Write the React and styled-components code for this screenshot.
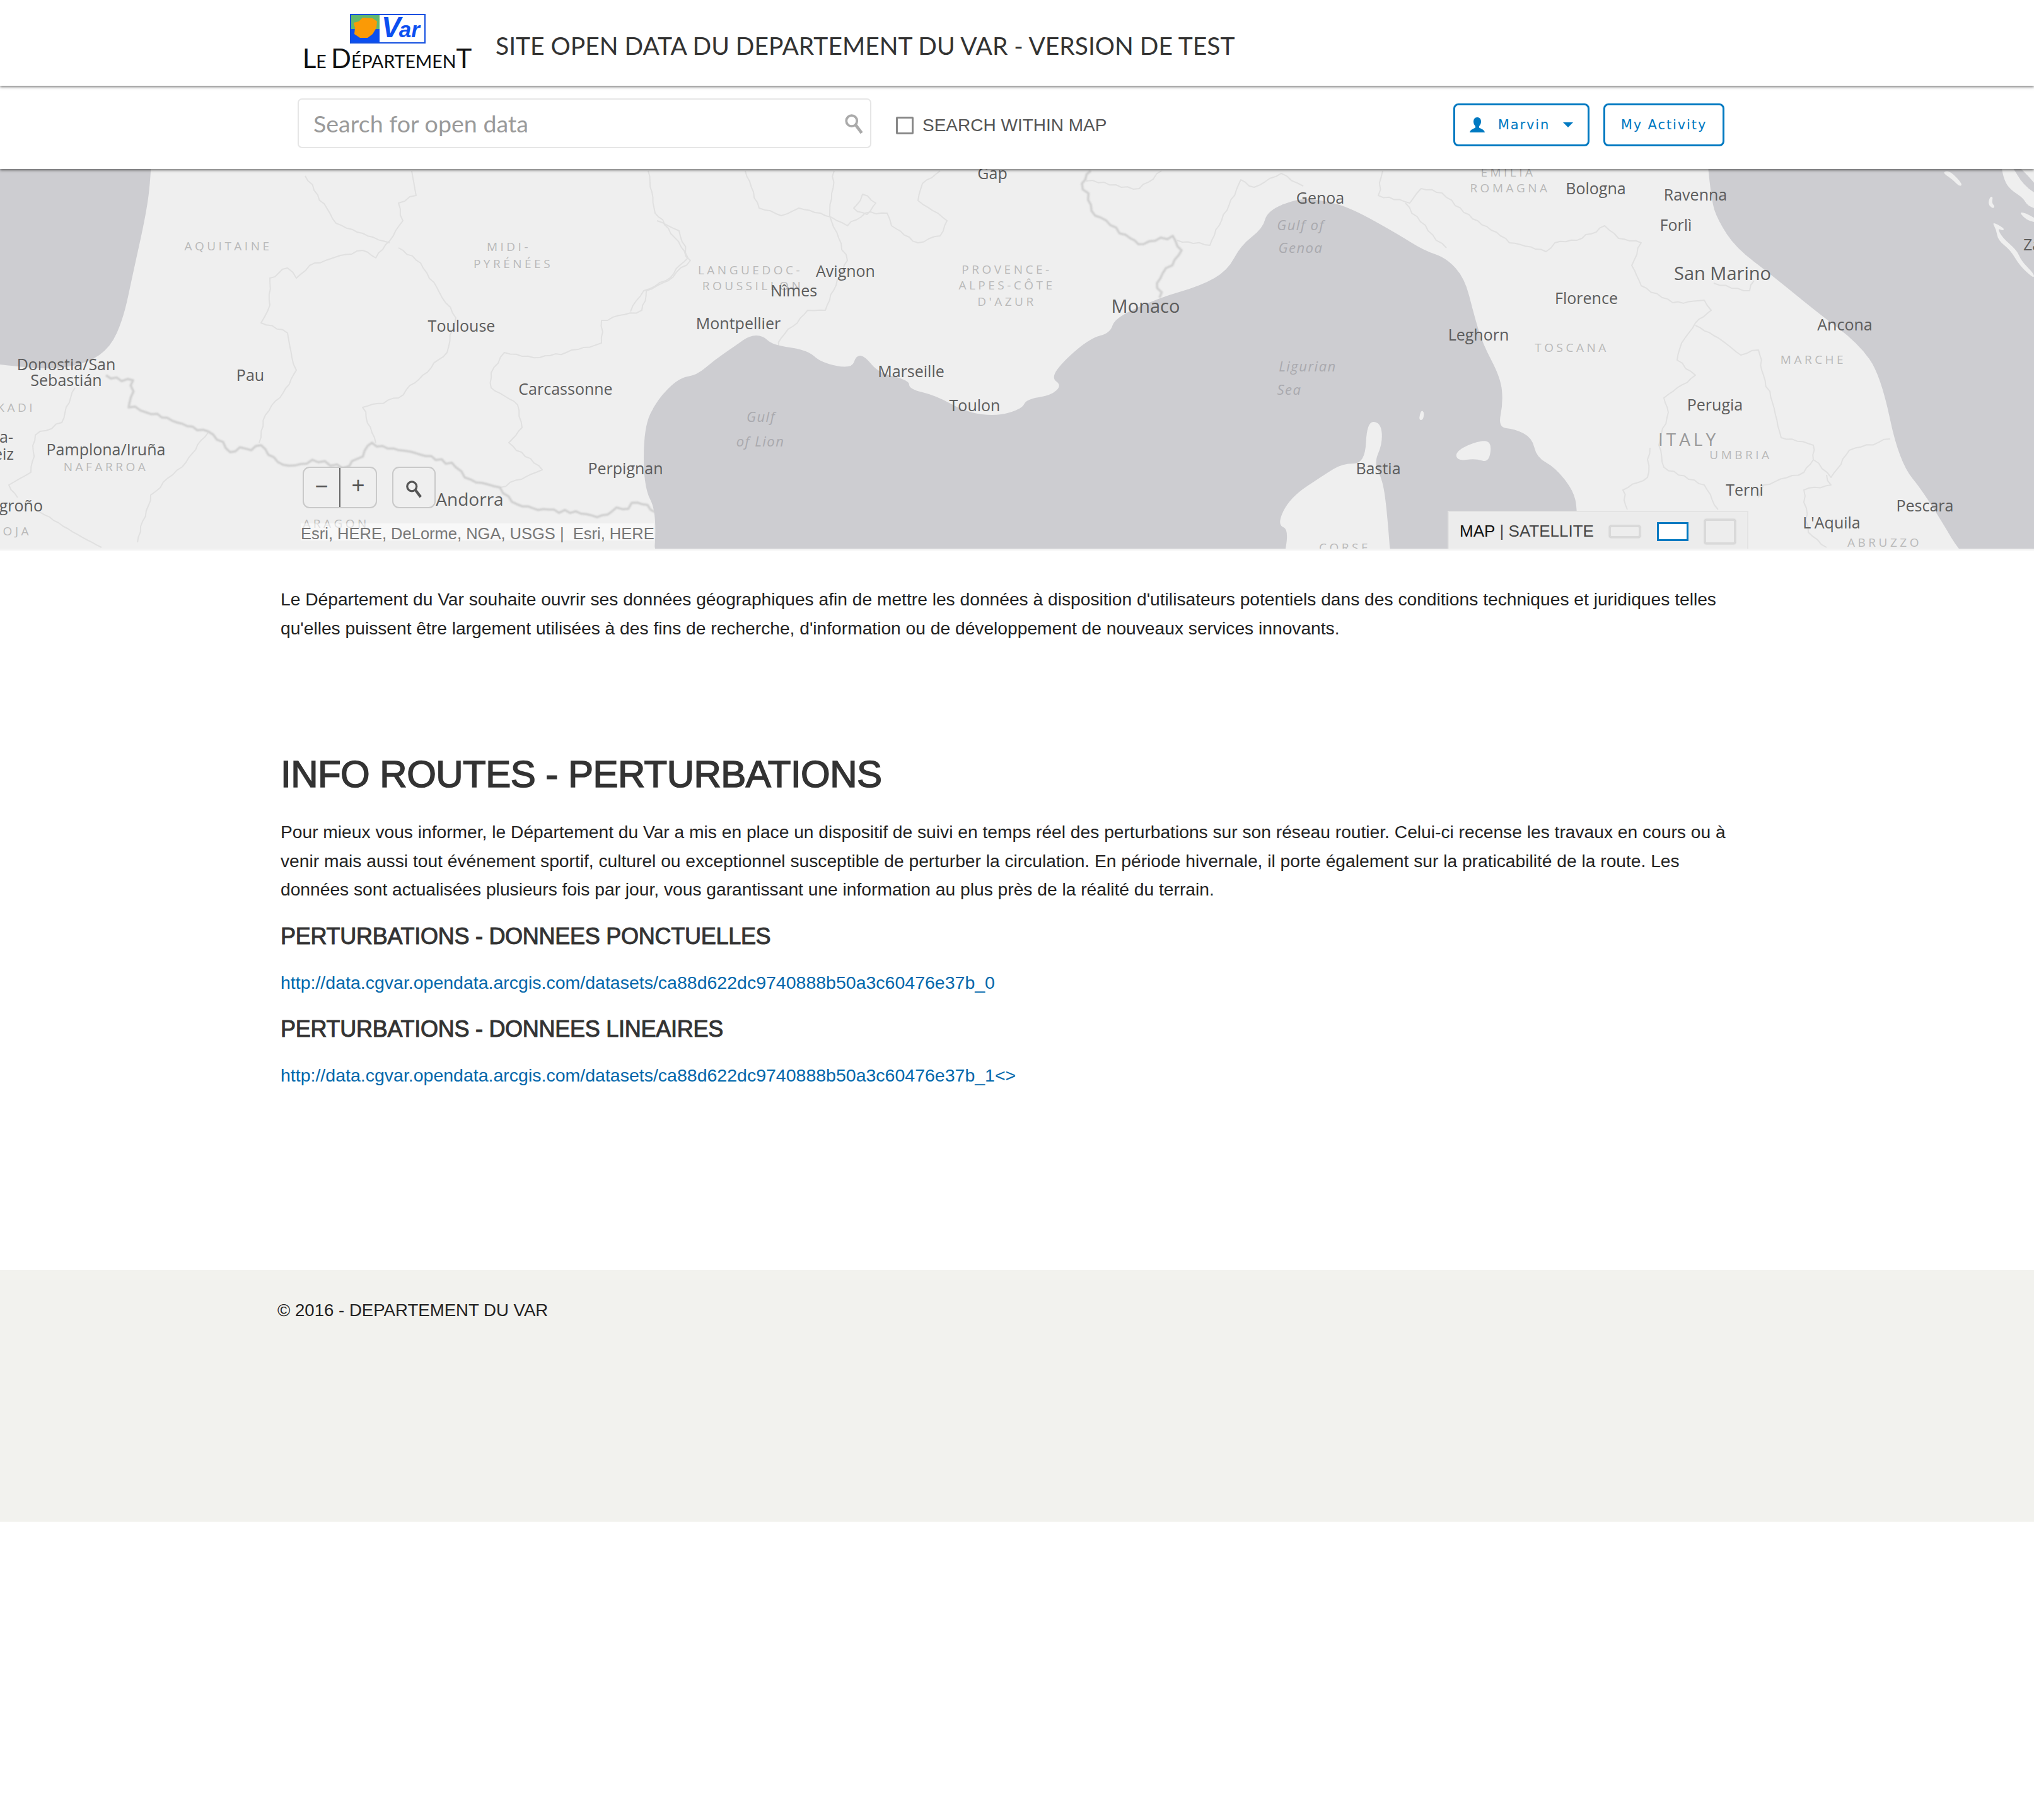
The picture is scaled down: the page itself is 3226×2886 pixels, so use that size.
import React from 'react'
import styled, { createGlobalStyle } from 'styled-components'

const GlobalStyle = createGlobalStyle`
  html, body {
    margin: 0;
    padding: 0;
    background: #fff;
    font-family: "Liberation Sans", Arial, sans-serif;
  }
`

const Page = styled.div`
  width: 3226px;
  min-height: 2886px;
  background: #fff;
`

/* header */
const Header = styled.header`
  position: relative;
  z-index: 3;
  height: 136px;
  padding-left: 482px;
  display: flex;
  align-items: flex-start;
  background: #fff;
  box-shadow: 0 2px 4px rgba(0, 0, 0, 0.5);
`
const Logo = styled.div`
  width: 266px;
  padding-top: 22px;
  display: flex;
  flex-direction: column;
  align-items: center;
`
const LogoFlag = styled.svg`
  width: 120px;
  height: 47px;
  display: block;
`
const LogoText = styled.div`
  margin: 5px 0 0 -2px;
  font-family: Lato, "Liberation Sans", sans-serif;
  font-size: 28.5px;
  line-height: 36px;
  color: #111;
  white-space: nowrap;
`
const LogoCap = styled.span`
  font-size: 42px;
`
const Title = styled.h1`
  margin: 50px 0 0 38px;
  font-family: Lato, "Liberation Sans", sans-serif;
  font-size: 39px;
  line-height: 44px;
  font-weight: 400;
  color: #333;
  white-space: nowrap;
`

/* search row */
const SearchBar = styled.div`
  position: relative;
  z-index: 2;
  height: 132px;
  box-sizing: border-box;
  padding: 0 491px 13px 472px;
  display: flex;
  align-items: center;
  background: #fff;
  box-shadow: 0 2px 4px rgba(0, 0, 0, 0.5);
`
const SearchBox = styled.div`
  position: relative;
  width: 910px;
  height: 79px;
  box-sizing: border-box;
  border: 2px solid #e6e6e6;
  border-radius: 7px;
`
const SearchInput = styled.input`
  width: 100%;
  height: 100%;
  box-sizing: border-box;
  padding: 0 60px 0 23px;
  border: 0;
  outline: 0;
  background: transparent;
  font-family: Lato, "Liberation Sans", sans-serif;
  font-size: 37.6px;
  color: #555;
  &::placeholder {
    color: #9a9a9a;
    opacity: 1;
  }
`
const SearchGlass = styled.svg`
  position: absolute;
  right: 9px;
  top: 22px;
  width: 32px;
  height: 34px;
`
const CheckLabel = styled.label`
  margin: 6px 0 0 39px;
  display: flex;
  align-items: center;
  gap: 14px;
  font-size: 28px;
  color: #555;
`
const CheckBox = styled.span`
  width: 28px;
  height: 28px;
  box-sizing: border-box;
  border: 3px solid #888;
  border-radius: 2px;
`
const Actions = styled.div`
  margin: 5px 0 0 auto;
  display: flex;
  gap: 22px;
`
const ActionButton = styled.button`
  width: ${p => p.$width}px;
  height: 68px;
  box-sizing: border-box;
  padding: 0;
  display: flex;
  align-items: center;
  justify-content: center;
  background: #fff;
  border: 3px solid #0079c1;
  border-radius: 8px;
  font-family: "DejaVu Sans", sans-serif;
  font-size: 21px;
  letter-spacing: 1.9px;
  color: #0079c1;
`
const UserIcon = styled.svg`
  width: 24px;
  height: 24px;
  margin-right: 21px;
`
const Caret = styled.span`
  width: 0;
  height: 0;
  margin-left: 21px;
  border-left: 8px solid transparent;
  border-right: 8px solid transparent;
  border-top: 8px solid #0079c1;
`

/* map */
const MapArea = styled.section`
  position: relative;
  height: 602px;
  overflow: hidden;
  background: #efefef;
  border-bottom: 3px solid #f3f3f3;
`
const MapDrawing = styled.svg`
  display: block;
  width: 3226px;
  height: 602px;
`
const MapLine = styled.polyline`
  fill: none;
  stroke: ${p => (p.$strong ? '#cfcfcf' : '#e0e0e0')};
  stroke-width: ${p => (p.$strong ? 3.5 : 2)};
  stroke-linejoin: round;
  filter: ${p => (p.$strong ? 'blur(1px)' : 'none')};
`
const CityLabel = styled.text`
  font-family: "Open Sans", sans-serif;
  font-size: ${p => p.$size || 25}px;
  fill: #5c5c5c;
  text-anchor: ${p => p.$anchor || 'middle'};
`
const RegionLabel = styled.text`
  font-family: "Open Sans", sans-serif;
  font-size: ${p => p.$size || 19}px;
  letter-spacing: ${p => p.$spacing || 4.5}px;
  fill: ${p => p.$fill || '#b9b9b9'};
  text-anchor: ${p => p.$anchor || 'middle'};
`
const SeaLabel = styled.text`
  font-family: "Open Sans", sans-serif;
  font-size: 22px;
  font-style: italic;
  letter-spacing: 1.5px;
  fill: #a9a9ae;
  text-anchor: middle;
`
const MapControls = styled.div`
  position: absolute;
  left: 480px;
  top: 472px;
  display: flex;
  gap: 24px;
`
const ZoomGroup = styled.div`
  width: 118px;
  height: 66px;
  box-sizing: border-box;
  display: flex;
  background: #efefef;
  border: 2px solid #c9c9c9;
  border-radius: 11px;
`
const ZoomButton = styled.div`
  flex: 1;
  display: flex;
  align-items: center;
  justify-content: center;
  padding-bottom: 4px;
  font-size: 36px;
  color: #555;
  & + & {
    padding-bottom: 6px;
    border-left: 2px solid #666;
  }
`
const GlassButton = styled.div`
  width: 69px;
  height: 66px;
  box-sizing: border-box;
  display: flex;
  align-items: center;
  justify-content: center;
  background: #efefef;
  border: 2px solid #c9c9c9;
  border-radius: 11px;
`
const GlassIcon = styled.svg`
  width: 28px;
  height: 30px;
  margin-top: 6px;
`
const Attribution = styled.div`
  position: absolute;
  left: 477px;
  top: 562px;
  width: 560px;
  height: 27px;
  line-height: 32px;
  white-space: pre;
  font-size: 25.5px;
  color: #777;
  background: rgba(255, 255, 255, 0.55);
`
const BasemapPanel = styled.div`
  position: absolute;
  left: 2296px;
  bottom: -3px;
  width: 477px;
  height: 63px;
  box-sizing: border-box;
  padding-left: 17px;
  display: flex;
  align-items: center;
  background: #ececec;
  border: 2px solid #e3e3e3;
  border-bottom: 0;
  font-size: 26px;
`
const BasemapActive = styled.span`
  color: #111;
`
const BasemapOther = styled.span`
  color: #444;
  white-space: pre;
`
const BasemapThumb = styled.span`
  width: 50px;
  height: ${p => p.$height}px;
  margin-left: ${p => p.$gap}px;
  box-sizing: border-box;
  background: ${p => (p.$active ? '#fff' : '#ededed')};
  border: ${p => (p.$active ? '3px solid #0079c1' : '3px solid #d9d9d9')};
  border-radius: ${p => (p.$active ? 0 : 4)}px;
  box-shadow: ${p => (p.$active ? 'none' : '0 0 2px #bbb')};
`

/* text content */
const Content = styled.main`
  width: 2300px;
  height: 1141px;
  box-sizing: border-box;
  margin-left: 445px;
  padding-top: 55px;
`
const Paragraph = styled.p`
  margin: 0;
  font-size: 28.2px;
  line-height: 45.6px;
  color: #222;
`
const Heading = styled.h2`
  margin: 174px 0 34px;
  font-size: 60px;
  line-height: 70px;
  font-weight: 400;
  letter-spacing: -0.53px;
  color: #333;
  -webkit-text-stroke: 1.6px #333;
`
const SubHeading = styled.h3`
  margin: 30px 0 29px;
  font-size: 36px;
  line-height: 42px;
  font-weight: 400;
  letter-spacing: -0.27px;
  color: #333;
  -webkit-text-stroke: 1px #333;
`
const DataLink = styled.a`
  display: block;
  font-size: 28.5px;
  line-height: 46px;
  color: #0067ab;
  text-decoration: none;
`

const Footer = styled.footer`
  height: 399px;
  box-sizing: border-box;
  padding: 46px 0 0 440px;
  background: #f2f2ee;
  font-size: 27.6px;
  line-height: 36px;
  color: #222;
`

const SEA = [
  '-60,200 242,200 239,284 232,339 211,434 196,505 175,552 140,576 91,586 42,584 -60,572',
  '1035,920 1042,813 1021,774 1021,679 1042,635 1077,600 1105,596 1133,572 1168,548 1189,533 1210,533 1225,548 1281,556 1302,576 1351,586 1358,564 1372,566 1393,592 1442,604 1442,618 1484,628 1533,655 1582,661 1621,649 1628,634 1667,628 1684,612 1667,600 1688,572 1730,537 1761,529 1768,505 1839,473 1905,454 1947,430 1968,390 2003,363 2010,335 2060,315 2100,319 2143,331 2215,371 2258,398 2294,410 2323,442 2337,497 2351,545 2380,600 2384,639 2376,679 2402,681 2430,695 2437,726 2466,742 2495,778 2502,809 2502,920 2208,920 2200,813 2193,762 2179,736 2193,703 2190,671 2168,669 2165,736 2129,736 2100,754 2046,790 2025,833 2046,841 2028,920',
  '2703,200 2714,319 2725,351 2753,394 2811,438 2883,497 2947,545 2983,596 3012,734 3055,786 3134,920 3300,920 3300,200',
]

const ISLANDS = [
  '2308,718 2335,703 2366,698 2362,735 2340,728 2312,732',
  '2250,667 2254,651 2259,655 2257,667',
  '3083,273 3093,272 3113,293 3108,297 3096,285 3084,277',
  '3156,313 3161,313 3159,323 3164,328 3161,332 3153,325',
  '3159,352 3179,363 3177,367 3168,363 3176,378 3199,398 3206,415 3226,435 3226,443 3203,422 3189,398 3169,382 3166,365',
  '3173,260 3189,260 3209,295 3240,315 3240,335 3216,328 3209,315 3189,302 3179,288',
  '3196,260 3240,260 3240,302',
  '3203,337 3216,340 3240,355 3219,352 3209,345',
]

const BORDERS = [
  '653,272 660,311 632,323 639,351 618,383 596,410 575,398 540,406 491,422 470,442 456,426 428,442 428,485 414,513 456,529 463,568 470,588 449,624 421,659 411,703',
  '1028,272 1039,339 1060,363 1095,414 1060,446 1025,462 1018,493 954,509 954,545 898,560 856,568 800,560 779,592 779,616 821,643 828,679 807,703 860,746 793,774',
  '119,616 98,671 56,691 49,750 14,770 28,790',
  '330,687 295,734 239,786 218,861',
  '63,813 161,869',
  '484,280 533,355 618,386',
  '632,394 667,418 723,505 709,560 632,632 575,647 596,703',
  '1042,351 1077,367 1091,410 1056,446 1021,462 1000,495',
  '1182,272 1204,331 1239,343 1267,331 1309,343 1344,359 1372,339 1407,339 1414,359 1456,386 1491,375 1502,351 1456,319 1463,292 1491,272',
  '1323,272 1316,343 1344,414 1309,493 1281,493 1239,537 1235,552',
  '1358,327 1368,309 1389,323 1375,341 1354,331 1358,327',
  '1723,288 1807,300 1842,272',
  '1867,382 1919,390 1968,286 1989,298 2032,276 2067,296',
  '2193,272 2186,311 2236,323 2254,300 2287,307 2308,327 2380,375 2394,386 2452,400 2466,386 2509,379 2545,359 2567,379 2603,386 2588,422 2603,454 2653,481 2703,477 2714,493 2689,513 2667,545 2660,572 2689,596 2639,632 2646,655 2631,707 2639,742 2703,770 2725,809',
  '2229,323 2265,367 2294,394',
  '2689,517 2718,533 2761,564 2789,556 2797,596 2811,639 2825,695 2876,707 2876,730 2904,758 2933,715 2998,697',
  '2876,730 2861,750 2797,770 2789,790',
  '2897,754 2904,770 2861,778 2868,845 2897,869',
  '2617,711 2613,758 2574,778 2581,809',
  '2718,450 2775,462 2782,446',
]

const STRONG_BORDERS = [
  '168,596 211,604 204,647 232,655 281,671 330,685 365,718 414,707 449,738 505,734 554,740 590,703 667,722 723,742 737,758 793,774 821,801 870,809 947,821 1011,798 1039,813',
  '1730,272 1716,292 1737,343 1793,379 1814,388 1860,375 1874,398 1835,450 1839,473',
]

const CITIES = [
  ['Gap', 1574, 285],
  ['Genoa', 2094, 324],
  ['Bologna', 2531, 309],
  ['Ravenna', 2689, 319],
  ['Forlì', 2658, 367],
  ['San Marino', 2732, 445, 29],
  ['Florence', 2516, 483],
  ['Ancona', 2926, 525],
  ['Leghorn', 2345, 541],
  ['Monaco', 1817, 497, 29],
  ['Avignon', 1341, 440],
  ['Nîmes', 1259, 471],
  ['Montpellier', 1171, 523],
  ['Toulouse', 732, 527],
  ['Carcassonne', 897, 627],
  ['Pau', 397, 605],
  ['Donostia/San', 105, 588],
  ['Sebastián', 105, 613],
  ['Pamplona/Iruña', 168, 723],
  ['Perpignan', 992, 753],
  ['Andorra', 745, 803, 28],
  ['Marseille', 1445, 599],
  ['Toulon', 1546, 653],
  ['Bastia', 2186, 753],
  ['Perugia', 2720, 652],
  ['Terni', 2767, 787],
  ['Pescara', 3053, 812],
  ["L'Aquila", 2905, 839],
  ['Logroño', 68, 812, 25, 'end'],
  ['Vitoria-', 21, 703, 25, 'end'],
  ['Gasteiz', 22, 730, 25, 'end'],
  ['Zadar', 3209, 398, 25, 'start'],
]

const REGIONS = [
  ['AQUITAINE', 362, 398],
  ['MIDI-', 807, 399],
  ['PYRÉNÉES', 814, 426],
  ['EUSKADI', 56, 654, 'end'],
  ['NAFARROA', 168, 748],
  ['LA RIOJA', 50, 850, 'end'],
  ['ARAGON', 533, 838],
  ['LANGUEDOC-', 1190, 436],
  ['ROUSSILLON', 1194, 461],
  ['PROVENCE-', 1597, 435],
  ['ALPES-CÔTE', 1597, 460],
  ["D'AZUR", 1597, 486],
  ['EMILIA', 2392, 281],
  ['ROMAGNA', 2395, 306],
  ['TOSCANA', 2493, 559],
  ['MARCHE', 2876, 578],
  ['UMBRIA', 2761, 729],
  ['ABRUZZO', 2989, 868],
  ['CORSE', 2133, 876],
]

const SEAS = [
  ['Gulf of', 2063, 366],
  ['Genoa', 2063, 402],
  ['Ligurian', 2074, 590],
  ['Sea', 2045, 627],
  ['Gulf', 1207, 670],
  ['of Lion', 1206, 709],
]

const toPairs = points => points.split(' ').map(p => p.split(',').map(Number))

// rounds a coast outline: quadratic curves through the midpoints of its edges
const smoothPath = points => {
  const pts = toPairs(points)
  const mid = (a, b) => [(a[0] + b[0]) / 2, (a[1] + b[1]) / 2]
  let start = mid(pts[pts.length - 1], pts[0])
  let d = `M${start[0]} ${start[1]}`
  pts.forEach((p, i) => {
    const m = mid(p, pts[(i + 1) % pts.length])
    d += ` Q${p[0]} ${p[1]} ${m[0]} ${m[1]}`
  })
  return d + ' Z'
}

// gives a straight border the wiggle of a real one, same result on every run
const roughLine = (points, amp) => {
  const pts = toPairs(points)
  const out = [pts[0]]
  for (let i = 1; i < pts.length; i++) {
    const [x0, y0] = pts[i - 1]
    const [x1, y1] = pts[i]
    const len = Math.hypot(x1 - x0, y1 - y0)
    const steps = Math.max(1, Math.round(len / 9))
    for (let s = 1; s <= steps; s++) {
      const t = s / steps
      const x = x0 + (x1 - x0) * t
      const y = y0 + (y1 - y0) * t
      const n = s === steps ? 0 : (Math.sin(x * 0.31 + y * 0.17) + Math.sin(x * 0.09 - y * 0.23)) * amp
      out.push([x + (n * (y1 - y0)) / len, y - (n * (x1 - x0)) / len])
    }
  }
  return out.map(p => `${p[0].toFixed(1)},${p[1].toFixed(1)}`).join(' ')
}

const Glass = ({ color }) => (
  <>
    <circle cx="11" cy="11" r="8" fill="none" stroke={color} strokeWidth="3.5" />
    <line x1="17" y1="17" x2="26" y2="29" stroke={color} strokeWidth="4.5" />
  </>
)

export default function App() {
  return (
    <Page>
      <GlobalStyle />
      <Header>
        <Logo>
          <LogoFlag viewBox="0 0 120 47">
            <rect x="1" y="1" width="118" height="45" fill="#fff" stroke="#1450e0" strokeWidth="2" />
            <rect x="2" y="2" width="45" height="22" fill="#62b86e" />
            <rect x="2" y="24" width="45" height="21" fill="#0c4ff0" />
            <path d="M6 14 L14 12 L20 6 L36 7 L43 12 L42 22 L36 32 L28 38 L16 38 L7 32 L8 22 Z" fill="#fb9a06" />
            <text x="50" y="37" fontFamily="Liberation Sans" fontWeight="700" fontStyle="italic" fill="#0c4ff0">
              <tspan fontSize="46">V</tspan>
              <tspan fontSize="35" dx="-3">ar</tspan>
            </text>
          </LogoFlag>
          <LogoText>
            <LogoCap>L</LogoCap>E <LogoCap>D</LogoCap>ÉPARTEMEN<LogoCap>T</LogoCap>
          </LogoText>
        </Logo>
        <Title>SITE OPEN DATA DU DEPARTEMENT DU VAR - VERSION DE TEST</Title>
      </Header>

      <SearchBar>
        <SearchBox>
          <SearchInput placeholder="Search for open data" readOnly />
          <SearchGlass viewBox="0 0 30 32">
            <Glass color="#aaa" />
          </SearchGlass>
        </SearchBox>
        <CheckLabel>
          <CheckBox />
          SEARCH WITHIN MAP
        </CheckLabel>
        <Actions>
          <ActionButton $width={216}>
            <UserIcon viewBox="0 0 24 24">
              <path
                fill="#0079c1"
                d="M12 0c4 0 6 3 6 7 0 3-1.500 5.500-3 7v2.500c2 1.500 8 2.500 9 7.500H0c1-5 7-6 9-7.500V14c-1.500-1.500-3-4-3-7 0-4 2-7 6-7z"
              />
            </UserIcon>
            Marvin
            <Caret />
          </ActionButton>
          <ActionButton $width={192}>My Activity</ActionButton>
        </Actions>
      </SearchBar>

      <MapArea>
        <MapDrawing viewBox="0 269 3226 602">
          {BORDERS.map((points, i) => (
            <MapLine key={i} points={roughLine(points, 1.2)} />
          ))}
          {STRONG_BORDERS.map((points, i) => (
            <MapLine key={i} points={roughLine(points, 2.5)} $strong />
          ))}
          {SEA.map((points, i) => (
            <path key={i} d={smoothPath(points)} fill="#cdcdd1" />
          ))}
          {ISLANDS.map((points, i) => (
            <path key={i} d={smoothPath(points)} fill="#efefef" />
          ))}
          {REGIONS.map(([label, x, y, anchor]) => (
            <RegionLabel key={label} x={x} y={y} $anchor={anchor}>{label}</RegionLabel>
          ))}
          <RegionLabel x={2678} y={708} $size={28} $spacing={5} $fill="#999">ITALY</RegionLabel>
          {SEAS.map(([label, x, y], i) => (
            <SeaLabel key={i} x={x} y={y}>{label}</SeaLabel>
          ))}
          {CITIES.map(([label, x, y, size, anchor]) => (
            <CityLabel key={label} x={x} y={y} $size={size} $anchor={anchor}>{label}</CityLabel>
          ))}
        </MapDrawing>
        <MapControls>
          <ZoomGroup>
            <ZoomButton>−</ZoomButton>
            <ZoomButton>+</ZoomButton>
          </ZoomGroup>
          <GlassButton>
            <GlassIcon viewBox="0 0 30 32">
              <Glass color="#555" />
            </GlassIcon>
          </GlassButton>
        </MapControls>
        <Attribution>Esri, HERE, DeLorme, NGA, USGS |  Esri, HERE</Attribution>
        <BasemapPanel>
          <BasemapActive>MAP</BasemapActive>
          <BasemapOther> | SATELLITE</BasemapOther>
          <BasemapThumb $height={20} $gap={24} />
          <BasemapThumb $height={30} $gap={26} $active />
          <BasemapThumb $height={40} $gap={25} />
        </BasemapPanel>
      </MapArea>

      <Content>
        <Paragraph>
          Le Département du Var souhaite ouvrir ses données géographiques afin de mettre les données à disposition d'utilisateurs potentiels dans des conditions techniques et juridiques telles qu'elles puissent être largement utilisées à des fins de recherche, d'information ou de développement de nouveaux services innovants.
        </Paragraph>
        <Heading>INFO ROUTES - PERTURBATIONS</Heading>
        <Paragraph>
          Pour mieux vous informer, le Département du Var a mis en place un dispositif de suivi en temps réel des perturbations sur son réseau routier. Celui-ci recense les travaux en cours ou à venir mais aussi tout événement sportif, culturel ou exceptionnel susceptible de perturber la circulation. En période hivernale, il porte également sur la praticabilité de la route. Les données sont actualisées plusieurs fois par jour, vous garantissant une information au plus près de la réalité du terrain.
        </Paragraph>
        <SubHeading>PERTURBATIONS - DONNEES PONCTUELLES</SubHeading>
        <DataLink href="#">http://data.cgvar.opendata.arcgis.com/datasets/ca88d622dc9740888b50a3c60476e37b_0</DataLink>
        <SubHeading>PERTURBATIONS - DONNEES LINEAIRES</SubHeading>
        <DataLink href="#">http://data.cgvar.opendata.arcgis.com/datasets/ca88d622dc9740888b50a3c60476e37b_1&lt;&gt;</DataLink>
      </Content>

      <Footer>© 2016 - DEPARTEMENT DU VAR</Footer>
    </Page>
  )
}
